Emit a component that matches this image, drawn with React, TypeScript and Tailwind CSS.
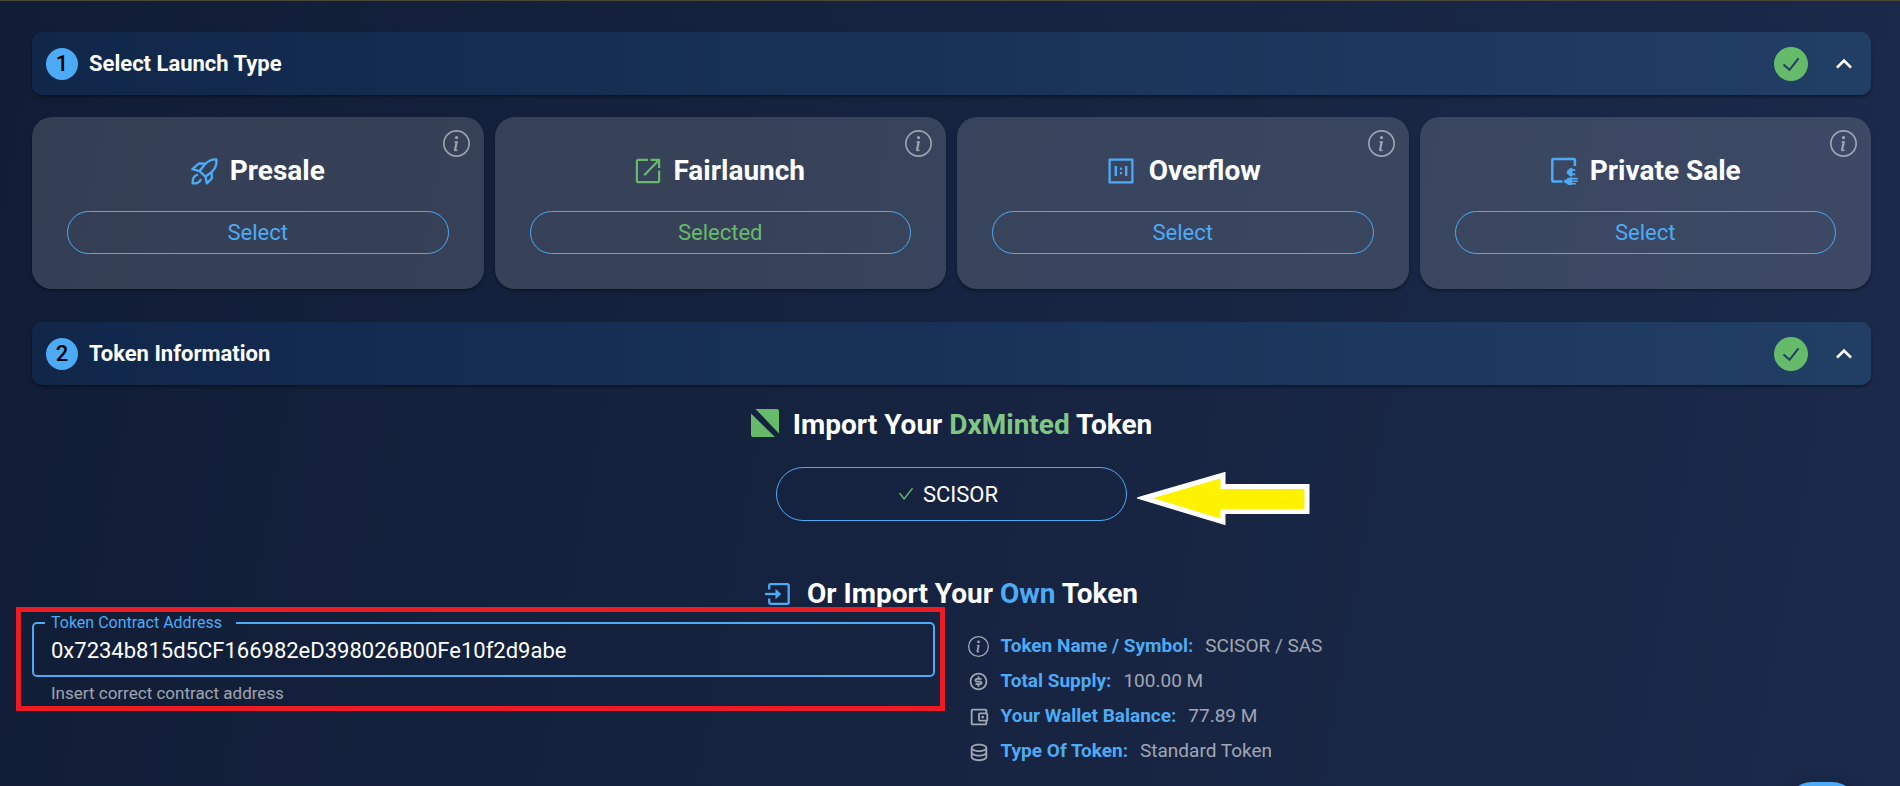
import React from "react";
import type { ReactNode } from "react";
import { AiOutlineOneToOne, AiOutlineCheck } from "react-icons/ai";
import { BsInfoCircle } from "react-icons/bs";
import { RiDatabase2Line, RiMoneyDollarCircleLine } from "react-icons/ri";
import { MdExpandLess, MdOutlineAccountBalanceWallet } from "react-icons/md";

function RocketIcon() {
  return (
    <svg viewBox="0 0 80 80" className="size-[27px]" fill="none" stroke="currentColor" strokeWidth="7" strokeLinejoin="round" strokeLinecap="round" aria-hidden="true">
      <path d="M75 4C61 3 50 9 40 20L25 39l18 16 18-13C72 31 77 18 75 4Z" />
      <path d="M40 17 24 16 4 33l21 6M61 42l1 18-15 15-4-20" />
      <path d="M18 50C9 53 4 62 5 75c10 1 19-1 23-10" />
    </svg>
  );
}

function LaunchIcon() {
  return (
    <svg viewBox="0 0 26 26" className="size-[26px]" fill="none" stroke="currentColor" strokeWidth="2.2" aria-hidden="true">
      <path d="M13 1.9H3.2a1.3 1.3 0 0 0-1.3 1.3v19.6a1.3 1.3 0 0 0 1.3 1.3h19.6a1.3 1.3 0 0 0 1.3-1.3V12.6" />
      <path d="M9.2 17.2 23.6 2.6M15.4 1.9h8.7v8.2" />
    </svg>
  );
}

function PrivateIcon() {
  return (
    <svg viewBox="0 0 28 28" className="size-7" fill="none" stroke="currentColor" aria-hidden="true">
      <path strokeWidth="2.5" d="M12.5 24.5H3.6a1.3 1.3 0 0 1-1.3-1.3V3.4a1.3 1.3 0 0 1 1.3-1.3h20a1.3 1.3 0 0 1 1.3 1.3V9" />
      <g fill="currentColor" stroke="none">
        <path d="M22.5 10.8v8.8c-2.4 0-4-1-4.6-2.6h-1v-3.4h1c.6-1.700 2.200-2.800 4.600-2.800Z" />
        <path d="M22 12.300h3.400v1.800H22zM22 16.400h3.400v1.800H22z" />
        <path d="M22 20.200v8.200c-3 0-5-.8-6-2.400h-1.800v-3.200H16c1-1.700 3-2.600 6-2.600Z" />
        <path d="M21.500 20.700h6.300v1.900h-6.300zM21.500 23.500h6.300v1.500h-6.300zM21.500 25.900h4.300v1.700h-4.300z" />
      </g>
    </svg>
  );
}

function SlashedSquareIcon() {
  return (
    <svg viewBox="0 0 28 28" className="mb-1 size-7" fill="currentColor" aria-hidden="true">
      <path d="M4.500 0H26a2 2 0 0 1 2 2v22.500zM0 4.500 24 28H2a2 2 0 0 1-2-2z" />
    </svg>
  );
}

function EnterBoxIcon() {
  return (
    <svg viewBox="0 0 28 24" className="h-6 w-7" fill="none" stroke="currentColor" strokeWidth="2.3" aria-hidden="true">
      <path d="M4.200 7.500V3.400a1.300 1.300 0 0 1 1.300-1.300h16.900a1.300 1.300 0 0 1 1.300 1.300v17.200a1.300 1.300 0 0 1-1.300 1.300H5.500a1.300 1.300 0 0 1-1.300-1.300v-4.100" />
      <path d="M0 12h13" />
      <path d="M10.500 6.800 16.200 12l-5.700 5.200z" fill="currentColor" stroke="none" />
    </svg>
  );
}

function DoneIcon() {
  return (
    <span className="flex size-[34px] items-center justify-center rounded-full bg-[#66bb6a] text-[#213d64]">
      <svg viewBox="0 0 20 20" className="size-5" fill="none" stroke="currentColor" strokeWidth="2" aria-hidden="true">
        <path d="M2.500 10.500 8.500 15.800 17.500 4.400" />
      </svg>
    </span>
  );
}

function SectionHeader({ step, title }: { step: number; title: string }) {
  return (
    <button
      type="button"
      className="flex h-[63px] w-full items-center rounded-[10px] bg-linear-to-r from-[#10274a] to-[#213e65] pr-[11px] pl-3.5 text-left shadow-[0_2px_3px_rgba(0,0,0,0.4)]"
    >
      <span className="mr-[11px] flex size-8 items-center justify-center rounded-full bg-[#4dabf5] text-[22px] font-medium text-black">
        {step}
      </span>
      <span className="flex-1 text-[22px] font-bold">{title}</span>
      <DoneIcon />
      <MdExpandLess className="ml-5 size-8" />
    </button>
  );
}

function LaunchCard({ icon, title, selected }: { icon: ReactNode; title: string; selected?: boolean }) {
  return (
    <article className="relative flex flex-col items-center rounded-[20px] bg-white/15 px-[35px] pt-9 pb-[35px] shadow-[0_2px_3px_rgba(0,0,0,0.35)]">
      <button type="button" aria-label={title + " details"} className="absolute top-[13px] right-3.5 text-white/50">
        <BsInfoCircle className="size-[27px]" />
      </button>
      <div className="mb-[22px] flex h-9 items-center gap-3">
        <span className={selected ? "text-[#66bb6a]" : "text-[#4dabf5]"}>{icon}</span>
        <h3 className="text-[28px] font-bold">{title}</h3>
      </div>
      <button
        type="button"
        className={
          selected
            ? "h-[43px] w-full rounded-full border border-[#4dabf5] text-[22px] text-[#66bb6a]"
            : "h-[43px] w-full rounded-full border border-[#4dabf5] text-[22px] text-[#4dabf5]"
        }
      >
        {selected ? "Selected" : "Select"}
      </button>
    </article>
  );
}

function Fact({ icon, label, value }: { icon: ReactNode; label: string; value: string }) {
  return (
    <div className="flex h-[35px] items-center text-[19px]">
      <span className="mr-[11px] flex w-[22px] justify-center text-white/60">{icon}</span>
      <dt className="mr-3 font-bold text-[#4dabf5]">{label}</dt>
      <dd className="text-white/60">{value}</dd>
    </div>
  );
}

export default function App() {
  return (
    <main className="min-h-screen overflow-hidden border-t border-[#4a4638] bg-linear-100 from-[#111d36] to-[#1b2a4b] pt-[31px] pr-[29px] pl-8 font-[Roboto,sans-serif] text-white">
      <section>
        <SectionHeader step={1} title="Select Launch Type" />
        <div className="mt-[22px] grid grid-cols-4 gap-[11px]">
          <LaunchCard icon={<RocketIcon />} title="Presale" />
          <LaunchCard icon={<LaunchIcon />} title="Fairlaunch" selected />
          <LaunchCard icon={<AiOutlineOneToOne className="size-8" />} title="Overflow" />
          <LaunchCard icon={<PrivateIcon />} title="Private Sale" />
        </div>
      </section>

      <section className="mt-[33px]">
        <SectionHeader step={2} title="Token Information" />
        <div className="mt-[22px] flex flex-col items-center">
          <h2 className="flex h-9 items-center gap-3.5 text-[28px] font-bold">
            <span className="text-[#66bb6a]">
              <SlashedSquareIcon />
            </span>
            <span>
              Import Your <span className="text-[#81c784]">DxMinted</span> Token
            </span>
          </h2>
          <div className="relative mt-6">
            <button
              type="button"
              className="flex h-[54px] w-[351px] items-center justify-center gap-2 rounded-full border border-[#4dabf5] pr-2 text-[22px]"
            >
              <AiOutlineCheck className="size-[18px] text-[#66bb6a]" />
              SCISOR
            </button>
            <svg
              viewBox="0 0 174 58"
              className="absolute top-0.5 left-full ml-2.5 h-[58px] w-[174px]"
              fill="#fff200"
              stroke="#ffffff"
              strokeWidth="5"
              aria-hidden="true"
            >
              <path d="M7 29 86 6v11.500h84v25H86V53Z" />
            </svg>
          </div>
          <h2 className="mt-[55px] flex h-9 items-center gap-3.5 text-[28px] font-bold">
            <span className="text-[#4dabf5]">
              <EnterBoxIcon />
            </span>
            <span>
              Or Import Your <span className="text-[#4dabf5]">Own</span> Token
            </span>
          </h2>
        </div>

        <div className="grid grid-cols-2">
          <div className="-mt-[5px] mr-[7px] -ml-4 self-start border-[5px] border-[#ed1c24] pr-[5px] pb-px pl-[11px]">
            <fieldset className="h-[65px] rounded-[5px] border-2 border-[#4dabf5] pr-4 pl-[11px]">
              <legend className="pr-3.5 pb-px pl-1.5 text-base leading-[21px] text-[#4dabf5]">
                <label htmlFor="contract">Token Contract Address</label>
              </legend>
              <input
                id="contract"
                type="text"
                defaultValue="0x7234b815d5CF166982eD398026B00Fe10f2d9abe"
                aria-describedby="contract-help"
                className="block h-8 w-full bg-transparent px-1.5 text-[22px] outline-none"
              />
            </fieldset>
            <p id="contract-help" className="mt-1 pl-[19px] text-[17px] leading-6 text-white/60">
              Insert correct contract address
            </p>
          </div>
          <dl className="pt-[17px] pl-4">
            <Fact icon={<BsInfoCircle className="size-[21px]" />} label="Token Name / Symbol:" value="SCISOR / SAS" />
            <Fact icon={<RiMoneyDollarCircleLine className="size-[21px]" />} label="Total Supply:" value="100.00 M" />
            <Fact icon={<MdOutlineAccountBalanceWallet className="size-[22px]" />} label="Your Wallet Balance:" value="77.89 M" />
            <Fact icon={<RiDatabase2Line className="size-[22px]" />} label="Type Of Token:" value="Standard Token" />
          </dl>
        </div>
      </section>

      <button
        type="button"
        aria-label="Scroll to top"
        className="fixed right-10 -bottom-13 h-14 w-[76px] rounded-[28px] bg-[#4dabf5] shadow-[0_0_12px_rgba(0,0,0,0.2)]"
      />
    </main>
  );
}
